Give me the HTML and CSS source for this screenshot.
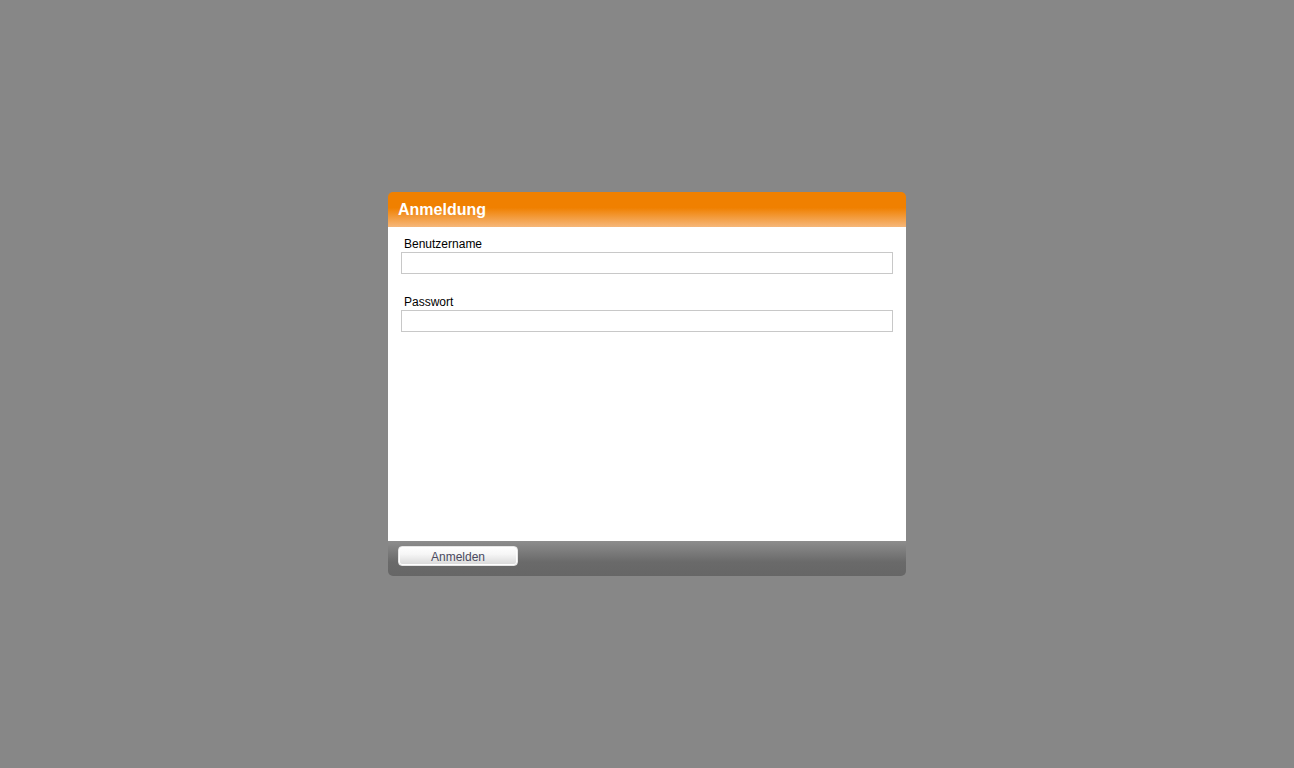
FILE: index.html
```html
<!DOCTYPE html>
<html>
<head>
<meta charset="utf-8">
<link rel="stylesheet" href="styles.css">
</head>
<body>
<div class="page">
  <div class="dialog">
    <div class="header">Anmeldung</div>
    <div class="body">
      <div class="field">
        <label class="label">Benutzername</label>
        <input class="input" type="text">
      </div>
      <div class="field">
        <label class="label">Passwort</label>
        <input class="input" type="password">
      </div>
    </div>
    <div class="footer">
      <button class="btn">Anmelden</button>
    </div>
  </div>
</div>
</body>
</html>
```
FILE: styles.css
```css
html, body {
  margin: 0;
  padding: 0;
  height: 100%;
  background: #878787;
  font-family: "Liberation Sans", Arial, sans-serif;
}
.page {
  padding-top: 192px;
  padding-left: 388px;
}
.dialog {
  width: 518px;
  border-radius: 5px;
  overflow: hidden;
  display: flex;
  flex-direction: column;
}
.header {
  height: 35px;
  box-sizing: border-box;
  padding: 8px 10px 0;
  color: #fff;
  font-weight: bold;
  font-size: 16px;
  line-height: 19px;
  background: linear-gradient(to bottom, #f08000 0%, #f08000 45%, #f6b77a 100%);
}
.body {
  background: #fff;
  height: 314px;
  box-sizing: border-box;
  padding: 9px 13px 0;
  display: flex;
  flex-direction: column;
  gap: 20px;
}
.field {
  display: flex;
  flex-direction: column;
}
.label {
  font-size: 12px;
  line-height: 16px;
  color: #000;
  padding-left: 3px;
}
.input {
  margin: 0;
  width: 492px;
  height: 22px;
  box-sizing: border-box;
  border: 1px solid #c8c8c8;
  padding: 2px 4px;
  font-family: inherit;
  font-size: 12px;
  outline: none;
}
.footer {
  height: 35px;
  box-sizing: border-box;
  padding: 5px 10px 0;
  background: linear-gradient(to bottom, #8d8d8d 0%, #6a6a6a 60%, #666 100%);
}
.btn {
  width: 120px;
  height: 20px;
  margin: 0;
  padding: 2px 0 0;
  border: 1px solid #e6e6e6;
  border-radius: 4px;
  box-shadow: inset 0 0 0 1px #fff;
  background: linear-gradient(to bottom, #ffffff 0%, #f6f6f6 40%, #d8d8d8 100%);
  color: #4a4a60;
  font-family: inherit;
  font-size: 12px;
  line-height: 16px;
}
```
